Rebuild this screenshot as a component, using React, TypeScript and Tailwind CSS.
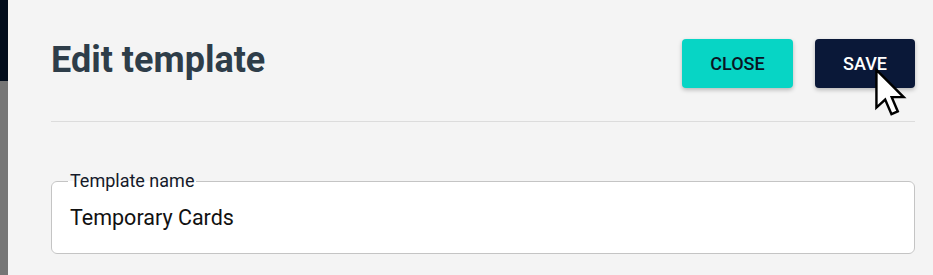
export default function App() {
  return (
    <div className="flex h-[275px] w-[933px] overflow-hidden font-['Roboto',sans-serif]">
      <div className="flex w-2 shrink-0 flex-col">
        <div className="h-[81px] bg-[#020d1c]" />
        <div className="flex-1 bg-[#767676]" />
      </div>
      <div className="relative flex-1 bg-[#f4f4f4] pl-[43px] pr-[18px]">
        <div className="flex h-[122px] items-start justify-between border-b border-[#dcdcdc]">
          <h1 className="mt-[38px] text-[36px] font-bold leading-[44px] text-[#2e3d49]">
            Edit template
          </h1>
          <div className="mt-[39px] flex gap-[22px]">
            <button className="h-[49px] w-[111px] rounded-[4px] bg-[#07d5c5] text-[18px] font-medium text-[#0a1424] shadow-[0_2px_4px_rgba(0,0,0,0.25)]">
              CLOSE
            </button>
            <button className="h-[49px] w-[100px] rounded-[4px] bg-[#0a1838] text-[18px] font-medium text-white shadow-[0_2px_4px_rgba(0,0,0,0.25)]">
              SAVE
            </button>
          </div>
        </div>
        <fieldset className="mt-[50px] h-[82px] rounded-[6px] border border-[#c4c4c4] bg-white pl-[18px] pr-[14px]">
          <legend className="-ml-[2px] px-[2px] text-[18px] leading-[18px] text-[#151a2a]">
            Template name
          </legend>
          <div className="pt-[14px] text-[21.5px] leading-[27px] text-[#111]">
            Temporary Cards
          </div>
        </fieldset>
        <svg
          className="absolute left-[866px] top-[67px]"
          width="34"
          height="52"
          viewBox="0 0 14 21"
        >
          <path
            d="M1 1 L1 16.5 L4.6 13.2 L7.2 19.2 L9.8 18.1 L7.3 12.2 L12.2 12.2 Z"
            fill="white"
            stroke="black"
            strokeWidth="1"
            strokeLinejoin="miter"
          />
        </svg>
      </div>
    </div>
  );
}
